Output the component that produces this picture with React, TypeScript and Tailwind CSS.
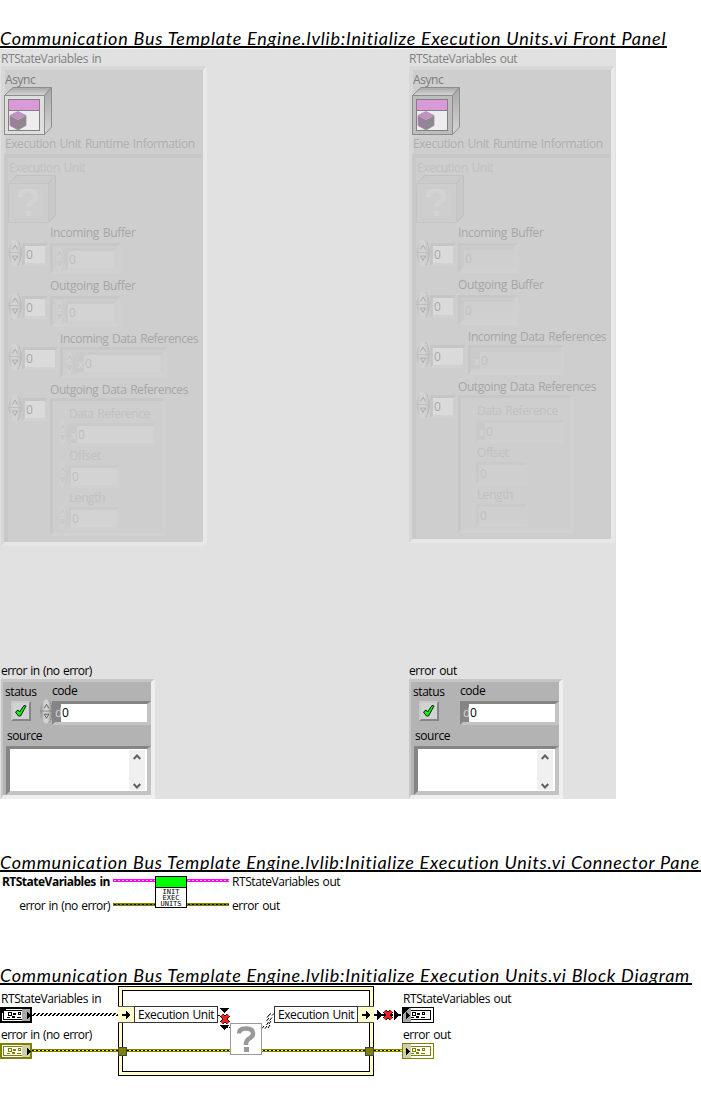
import type { ReactNode } from "react";

const FONT = "whitespace-nowrap font-['Open_Sans',sans-serif] [word-spacing:1px]";
const DIGIT = "whitespace-nowrap font-['Open_Sans',sans-serif] text-[12px] leading-[18px]";

function Heading({ children, className }: { children: ReactNode; className: string }) {
  return (
    <h2
      className={`h-[23px] shrink-0 border-b-2 border-black whitespace-nowrap font-['Lato',sans-serif] text-[18px] leading-[26px] italic text-black ${className}`}
    >
      {children}
    </h2>
  );
}

const TRACK = {
  normal: "tracking-[-0.43px]",
  loose: "tracking-[-0.34px]",
  tight: "tracking-[-0.58px]",
};

function Label({ children, className = "", track = "normal" }: { children: ReactNode; className?: string; track?: keyof typeof TRACK }) {
  return <div className={`${FONT} h-4 shrink-0 text-[12px] leading-[18px] ${TRACK[track]} ${className}`}>{children}</div>;
}

/* Raised class-object icon with a lit top and right side. */
function ObjectIcon({ face }: { face: string }) {
  return (
    <svg className="block" width="48" height="48" viewBox="0 0 48 48">
      <defs>
        <linearGradient id="side" x1="0" y1="0" x2="0" y2="1">
          <stop offset="0" stopColor="#a6a6a6" />
          <stop offset="1" stopColor="#d6d6d6" />
        </linearGradient>
      </defs>
      <polygon points="0.5,8.5 9,0.5 47.5,0.5 40.5,8.5" fill="url(#side)" stroke="#8d8d8d" />
      <polygon points="40.5,8.5 47.5,0.5 47.5,40 40.5,47.5" fill="url(#side)" stroke="#8d8d8d" />
      <rect x="0.5" y="8.5" width="40" height="39" fill={face} stroke="#8d8d8d" />
      <rect x="4.5" y="12.5" width="31" height="31" fill="#ededed" stroke="#808080" />
      <rect x="5" y="13" width="30" height="10" fill="#da9ada" />
      <rect x="5" y="23" width="30" height="1" fill="#808080" />
      <polygon points="6,28.5 14,24.5 22,28.5 14,33" fill="#c193c3" />
      <polygon points="6,28.5 14,33 14,43 6,38.5" fill="#9b829c" />
      <polygon points="22,28.5 14,33 14,43 22,38.5" fill="#8b8b8b" />
      <polygon points="6,28.5 14,24.5 22,28.5 22,38.5 14,43 6,38.5" fill="none" stroke="#ab80ad" strokeWidth="0.7" />
    </svg>
  );
}

function UnknownIcon() {
  return (
    <svg className="block" width="48" height="48" viewBox="0 0 48 48" shapeRendering="crispEdges">
      <polygon points="0.5,8.5 9,0.5 47.5,0.5 40,8.5" fill="#cbcbcb" stroke="#c1c1c1" />
      <polygon points="40,8.5 47.5,0.5 47.5,40 40,47.5" fill="#c9c9c9" stroke="#c1c1c1" />
      <rect x="0.5" y="8.5" width="40" height="39" fill="#cdcdcd" stroke="#c4c4c4" />
      <rect x="4.5" y="12.5" width="31" height="31" fill="#cecece" stroke="#cacaca" />
      <path d="M12.5 22q0-6 7.5-6t7.5 6q0 3-3.5 5t-4 5" fill="none" stroke="#d3d3d3" strokeWidth="4.5" />
      <rect x="17.5" y="36" width="5" height="5" fill="#d3d3d3" />
    </svg>
  );
}

type Tone = "light" | "faint" | "solid";

const SPIN = {
  light: ["#d3d3d3", "#bebebe", "#b3b3b3", "#a6a6a6"],
  faint: ["#d1d1d1", "#cacaca", "#c5c5c5", "#bfbfbf"],
  solid: ["#d2d2d2", "#868686", "#747474", "#4c4c4c"],
};

function Spinner({ tone, className }: { tone: Tone; className: string }) {
  const [lit, shade, edge, mark] = SPIN[tone];
  const id = `spin-${tone}`;
  return (
    <svg className={`block shrink-0 ${className}`} viewBox="0 0 14 28" preserveAspectRatio="none">
      <defs>
        <linearGradient id={id}>
          <stop offset="0" stopColor={shade} />
          <stop offset="0.3" stopColor={lit} />
          <stop offset="0.6" stopColor={lit} />
          <stop offset="1" stopColor={shade} />
        </linearGradient>
      </defs>
      <ellipse cx="7" cy="14" rx="6.5" ry="13.5" fill={`url(#${id})`} />
      <path d="M9.5 1.5C14.5 6 14.5 22 9 27" fill="none" stroke={edge} strokeWidth="0.8" strokeDasharray="2 1" />
      <path d="M0.5 13.5H13.5" stroke={shade} />
      <path d="M4.5 10.5 7 6 9.5 10.5M4.5 17H9.5L7 21.5Z" fill="none" stroke={mark} strokeWidth="0.9" />
    </svg>
  );
}

const BEVEL = {
  light: "border-3 border-t-[#c5c5c5] border-l-[#c6c6c6] border-r-[#cecece] border-b-[#d1d1d1]",
  faint: "border-3 border-t-[#cacaca] border-l-[#cacaca] border-r-[#cfcfcf] border-b-[#d0d0d0]",
  sunk: "border-3 border-t-[#c7c7c7] border-l-[#c7c7c7] border-r-[#d0d0d0] border-b-[#d1d1d1]",
};

/* Sunken number box. */
function NumberBox({ tone, hex, bare, className }: { tone: "light" | "faint"; hex?: boolean; bare?: boolean; className: string }) {
  const fill = tone === "light" ? "bg-[#dadada] text-[#a8a8a8]" : bare ? "bg-[#cfcfcf] text-[#c1c1c1]" : "bg-[#d3d3d3] text-[#bdbdbd]";
  return (
    <div className={`flex h-[23px] shrink-0 ${BEVEL[tone]} ${className}`}>
      {hex && <div className="w-[6px] bg-[#c9c9cb] font-['Open_Sans',sans-serif] text-[10px] leading-[18px] text-[#d8d8d8]">x</div>}
      <div className={`${DIGIT} grow pl-px ${fill}`}>0</div>
    </div>
  );
}

function ArrayRow({ height, wide, out, frame, box, hex }: { height: string; wide?: boolean; out?: boolean; frame: string; box: string; hex?: boolean }) {
  const drop = wide ? "mt-px" : "mt-[3px]";
  return (
    <div className={`flex shrink-0 ${height}`}>
      <Spinner tone="light" className={`h-[28px] w-[14px] ${wide ? "-mt-[3px]" : "-mt-px"}`} />
      <NumberBox tone="light" className={`${drop} ${wide ? "w-[36px]" : "w-[26px]"}`} />
      <div className={`ml-[2px] flex ${BEVEL.sunk} ${drop} ${frame}`}>
        {!out && <Spinner tone="faint" className="ml-px h-[26px] w-[11px]" />}
        <NumberBox tone="faint" hex={hex} bare={out} className={`${out ? "mt-px" : "mt-[2px]"} ${box}`} />
      </div>
    </div>
  );
}

function Field({ name, out, hex, box }: { name: string; out?: boolean; hex?: boolean; box: string }) {
  return (
    <div className="h-[42px] shrink-0">
      <Label className="ml-[16px] text-[#c1c1c1]">{name}</Label>
      <div className="ml-[4px] flex">
        {out ? <div className="w-[11px]" /> : <Spinner tone="faint" className="-mt-px h-[26px] w-[11px]" />}
        <NumberBox tone="faint" hex={hex} bare={out} className={`mt-[2px] ${box}`} />
      </div>
    </div>
  );
}

function StateCluster({ out }: { out?: boolean }) {
  const small = out ? "h-[30px] w-[60px]" : "h-[31px] w-[71px]";
  const smallBox = out ? "w-[54px]" : "w-[52px]";
  return (
    <div className="ml-px flex w-[206px] flex-col">
      <Label className="mt-px text-[#808080]">RTStateVariables {out ? "out" : "in"}</Label>
      <div
        className={`flex w-[206px] flex-col border-4 border-t-[#d7d7d7] border-r-[#e8e8e8] border-b-[#e7e7e7] border-l-[#d7d7d7] bg-[#cecece] ${out ? "h-[477px]" : "h-[480px]"}`}
      >
        <Label className="mt-px text-[#7c7c7c]">Async</Label>
        <div className="-ml-px h-12 shrink-0">
          <ObjectIcon face={out ? "#bdbdbd" : "#dedede"} />
        </div>
        <Label className="text-[#afafaf]">Execution Unit Runtime Information</Label>
        <div className="mt-[3px] -ml-px flex min-h-0 w-[199px] grow flex-col border-t-4 border-l-4 border-t-[#c8c8c8] border-l-[#c8c8c8]">
          <Label className="mt-px ml-px text-[#c1c1c1]">Execution Unit</Label>
          <div className="h-12 shrink-0">
            <UnknownIcon />
          </div>
          <Label track="loose" className="mt-px ml-[42px] text-[#a6a6a6]">Incoming Buffer</Label>
          <ArrayRow height={out ? "h-[36px]" : "h-[37px]"} out={out} frame={small} box={smallBox} />
          <Label track="loose" className="ml-[42px] text-[#a6a6a6]">Outgoing Buffer</Label>
          <ArrayRow height={out ? "h-[36px]" : "h-[37px]"} out={out} frame={small} box={smallBox} />
          <Label className="ml-[52px] text-[#a6a6a6]">Incoming Data References</Label>
          <ArrayRow height={out ? "h-[34px]" : "h-[35px]"} wide out={out} hex frame={out ? "h-[30px] w-[96px]" : "h-[31px] w-[107px]"} box={out ? "w-[90px]" : "w-[88px]"} />
          <Label className="ml-[42px] text-[#a6a6a6]">Outgoing Data References</Label>
          <div className="flex">
            <Spinner tone="light" className="-mt-[3px] h-[28px] w-[14px]" />
            <NumberBox tone="light" className="mt-px w-[26px]" />
            <div className={`mt-px ml-[2px] flex h-[138px] w-[115px] flex-col pt-[4px] ${BEVEL.sunk}`}>
              <Field name="Data Reference" out={out} hex box="w-[88px]" />
              <Field name="Offset" out={out} box="w-[52px]" />
              <Field name="Length" out={out} box="w-[52px]" />
            </div>
          </div>
        </div>
      </div>
    </div>
  );
}

const SUNK_DARK = "border-t-[#858585] border-l-[#858585] border-r-[#c3c3c3] border-b-[#c3c3c3]";

function ErrorCluster({ out }: { out?: boolean }) {
  return (
    <div className="ml-px flex w-[154px] flex-col text-black">
      <Label track={out ? "normal" : "tight"}>{out ? "error out" : "error in (no error)"}</Label>
      <div className="mt-px h-[120px] border-t-3 border-r-4 border-b-4 border-l-2 border-t-[#c6c6c6] border-r-[#efefef] border-b-[#efefef] border-l-[#c6c6c6] bg-[#b3b3b3] pl-[2px]">
        <div className="flex h-[19px]">
          <Label className="mt-px w-[47px]">status</Label>
          <Label>code</Label>
        </div>
        <div className="flex h-[26px]">
          <div className="ml-[6px] h-5 w-5 border-2 border-t-[#c9c9c9] border-r-[#858585] border-b-[#858585] border-l-[#c9c9c9] bg-[#d2d2d2]">
            <svg className="block" width="16" height="16" viewBox="0 0 16 16">
              <path d="M2.5 9 5 7 6.5 9 11 2.5 13 3 7.5 13H5.5Z" fill="#00ff00" stroke="#111" strokeWidth="1" />
            </svg>
          </div>
          <div className="ml-[9px] w-[14px]">{!out && <Spinner tone="solid" className="-mt-[2px] h-[25px] w-[13px]" />}</div>
          <div className={`-ml-[2px] flex h-[24px] w-[99px] border-3 border-r-4 ${SUNK_DARK}`}>
            <div className={`${DIGIT} w-[6px] bg-[#858585] text-[#d4d4d4]`}>d</div>
            <div className={`${DIGIT} grow bg-white pl-px`}>0</div>
          </div>
        </div>
        <Label className="ml-[2px]">source</Label>
        <div className={`mt-[3px] ml-px flex h-[49px] w-[145px] border-4 border-t-3 ${SUNK_DARK}`}>
          <div className="grow bg-white" />
          <div className="flex w-[18px] flex-col items-center justify-between border-t border-r-2 border-b border-white bg-[#f0f0f0] py-[4px]">
            <svg className="block" width="8" height="6" viewBox="0 0 8 6">
              <path d="M0.7 5 4 1.5 7.3 5" fill="none" stroke="#606060" strokeWidth="2" />
            </svg>
            <svg className="-mb-[3px] block" width="8" height="6" viewBox="0 0 8 6">
              <path d="M0.7 1 4 4.5 7.3 1" fill="none" stroke="#606060" strokeWidth="2" />
            </svg>
          </div>
        </div>
      </div>
    </div>
  );
}

function Wire({ color, core }: { color: string; core: string }) {
  return (
    <svg className="block shrink-0" width="42" height="3" shapeRendering="crispEdges">
      <rect width="42" height="3" fill={color} />
      <path d="M1 1.5H42" stroke={core} strokeDasharray="2 2" />
    </svg>
  );
}

function WirePair() {
  return (
    <div className="flex flex-col gap-[21px] pt-[5px]">
      <Wire color="#ff00ff" core="#ffc8ff" />
      <Wire color="#808000" core="#000000" />
    </div>
  );
}

function ConnectorPane() {
  return (
    <div className="flex h-[36px] pt-[2px] text-black">
      <div className="-mt-px flex w-[110px] flex-col items-end">
        <div className={`${FONT} h-4 text-[12px] leading-[18px] font-bold tracking-[-0.5px]`}>RTStateVariables in</div>
        <Label track="tight" className="mt-2">error in (no error)</Label>
      </div>
      <div className="ml-[3px]">
        <WirePair />
      </div>
      <div className="mt-[2px] h-8 w-8 border border-black bg-white">
        <div className="h-[11px] border-b border-black bg-[#00ff00]" />
        <div className="pt-px text-center font-['DejaVu_Sans_Mono',monospace] text-[7px] leading-[6px]">
          <div>INIT</div>
          <div>EXEC</div>
          <div>UNITS</div>
        </div>
      </div>
      <WirePair />
      <div className="-mt-px ml-[3px]">
        <Label>RTStateVariables out</Label>
        <Label className="mt-2">error out</Label>
      </div>
    </div>
  );
}

function Terminal({ x, y, color, out, heavy }: { x: number; y: number; color: string; out?: boolean; heavy?: boolean }) {
  const w = heavy ? 2 : 1;
  return (
    <g transform={`translate(${x} ${y})`}>
      <rect width="32" height="16" fill={color} />
      <rect x={w} y={w} width={32 - 2 * w} height={16 - 2 * w} fill="#fff" />
      <rect x="3.5" y="3.5" width="25" height="9" fill="none" stroke={color} />
      <rect x={out ? 1 : 22} y={w} width="8" height={16 - 2 * w} fill={color === "#000" ? "#a8a8a8" : "#d0d0a8"} />
      <path d={out ? "M4 5V12L8 8.5Z" : "M27 5V12L31 8.5Z"} fill="#000" />
      <g transform={out ? "translate(2 0)" : undefined} fill={color}>
        <path d="M8 5H12V9H8ZM9 6V8H11V6Z" fillRule="evenodd" />
        <path d="M13 6H16V8H13ZM18 5H21V8H18ZM19 6V7H20V6ZM7 10H10V11H7ZM12 9H15V11H12ZM17 10H21V11H17Z" fillRule="evenodd" />
      </g>
      {color === "#000" && <path d="M0 0H8L0 8Z" fill="#000" />}
    </g>
  );
}

function RedCross({ x, y }: { x: number; y: number }) {
  return (
    <g transform={`translate(${x} ${y})`}>
      <path d="M-3.5-4 3.5 4M3.5-4-3.5 4" stroke="#000" strokeWidth="4" />
      <path d="M-3.5-4 3.5 4M3.5-4-3.5 4" stroke="#f02020" strokeWidth="2.6" />
    </g>
  );
}

function OliveWire({ x1, x2 }: { x1: number; x2: number }) {
  return (
    <g>
      <rect x={x1} y="64" width={x2 - x1} height="3" fill="#808000" />
      <path d={`M${x1} 65.5H${x2}`} stroke="#ffff00" />
      <path d={`M${x1} 65.5H${x2}`} stroke="#000" strokeDasharray="2 2" />
    </g>
  );
}

function BlockDiagram() {
  return (
    <div className="relative h-[100px] w-[701px] text-black">
      <svg className="absolute top-0 left-0" width="450" height="100" viewBox="0 0 450 100" shapeRendering="crispEdges">
        <defs>
          <pattern id="hatch" width="4" height="3" patternUnits="userSpaceOnUse" y="28">
            <path d="M2 0H4V1H2ZM1 1H3V2H1ZM0 2H2V3H0Z" fill="#000" />
          </pattern>
        </defs>
        <rect x="118.5" y="1.5" width="255" height="89" fill="#ffffcc" stroke="#000" />
        <rect x="122.5" y="5.5" width="247" height="81" fill="#fff" stroke="#000" />
        <rect x="32" y="28" width="87" height="3" fill="url(#hatch)" />
        <rect x="118" y="21" width="16" height="17" fill="#ffffcc" />
        <path d="M118 21.5H134M118 37.5H134" stroke="#555" />
        <rect x="134.5" y="21.5" width="83" height="16" fill="#fff" stroke="#333" />
        <rect x="274.5" y="21.5" width="83" height="16" fill="#fff" stroke="#333" />
        <rect x="358" y="21" width="16" height="17" fill="#ffffcc" />
        <path d="M358 21.5H374M358 37.5H374" stroke="#555" />
        <path d="M122 29H126V26H127L130 30 127 34H126V31H122ZM362 29H366V26H367L370 30 367 34H366V31H362Z" fill="#000" />
        <OliveWire x1={32} x2={118} />
        <OliveWire x1={127} x2={365} />
        <OliveWire x1={374} x2={402} />
        <rect x="118.5" y="62.5" width="8" height="8" fill="#808000" stroke="#444" />
        <rect x="365.5" y="62.5" width="8" height="8" fill="#808000" stroke="#444" />
        <path d="M220 23H229L224.5 28ZM220 40H229L224.5 45Z" fill="#000" />
        <path d="M218 30.5H221M226 42.5H230" stroke="#000" strokeDasharray="2 1" />
        <RedCross x={225} y={34} />
        <g fill="none" stroke="#000" shapeRendering="auto">
          <path d="M262 43.5 264 41M265 43.5 267 41M266.5 40 268.5 37M266.5 36 269 33M267 32.5 269.500 29.500M269 30 271 28.5M272 30.5 274 28.5" />
          <path d="M268 43 270 40M269 39 271 36M269.5 35.5 272 32.5" />
        </g>
        <rect x="230.5" y="38.5" width="31" height="31" fill="#fff" stroke="#999" />
        <path d="M239 48.5q0-5 7-5t7 5q0 3-3 4.5t-4 5v2" fill="none" stroke="#999" strokeWidth="4.5" shapeRendering="auto" />
        <rect x="243.5" y="62" width="5" height="5" fill="#999" />
        <path d="M374 29.5H402" stroke="#000" strokeWidth="2" strokeDasharray="3 1" />
        <path d="M377 25V35L383 30ZM394 25V35L400 30Z" fill="#000" />
        <RedCross x={388} y={30} />
        <Terminal x={0} y={22} color="#000" heavy />
        <Terminal x={402} y={22} color="#000" out />
        <Terminal x={0} y={58} color="#808000" heavy />
        <Terminal x={402} y={58} color="#808000" out />
      </svg>
      <Label className="absolute top-[5px] left-px">RTStateVariables in</Label>
      <Label track="tight" className="absolute top-[41px] left-px">error in (no error)</Label>
      <Label className="absolute top-[21px] left-[138px]">Execution Unit</Label>
      <Label className="absolute top-[21px] left-[278px]">Execution Unit</Label>
      <Label className="absolute top-[5px] left-[403px]">RTStateVariables out</Label>
      <Label className="absolute top-[41px] left-[403px]">error out</Label>
    </div>
  );
}

export default function App() {
  return (
    <main className="flex h-[1101px] w-[701px] flex-col overflow-hidden bg-white">
      <Heading className="mt-[25px] w-[667px] tracking-[0.77px]">Communication Bus Template Engine.lvlib:Initialize Execution Units.vi Front Panel</Heading>
      <div className="mt-px grid h-[750px] w-[616px] shrink-0 grid-cols-[408px_208px] grid-rows-[613px_137px] bg-[#e1e1e1]">
        <StateCluster />
        <StateCluster out />
        <ErrorCluster />
        <ErrorCluster out />
      </div>
      <Heading className="mt-[50px] w-[701px] tracking-[0.74px]">Communication Bus Template Engine.lvlib:Initialize Execution Units.vi Connector Pane</Heading>
      <ConnectorPane />
      <Heading className="mt-[54px] w-[692px] tracking-[0.75px]">Communication Bus Template Engine.lvlib:Initialize Execution Units.vi Block Diagram</Heading>
      <BlockDiagram />
    </main>
  );
}
